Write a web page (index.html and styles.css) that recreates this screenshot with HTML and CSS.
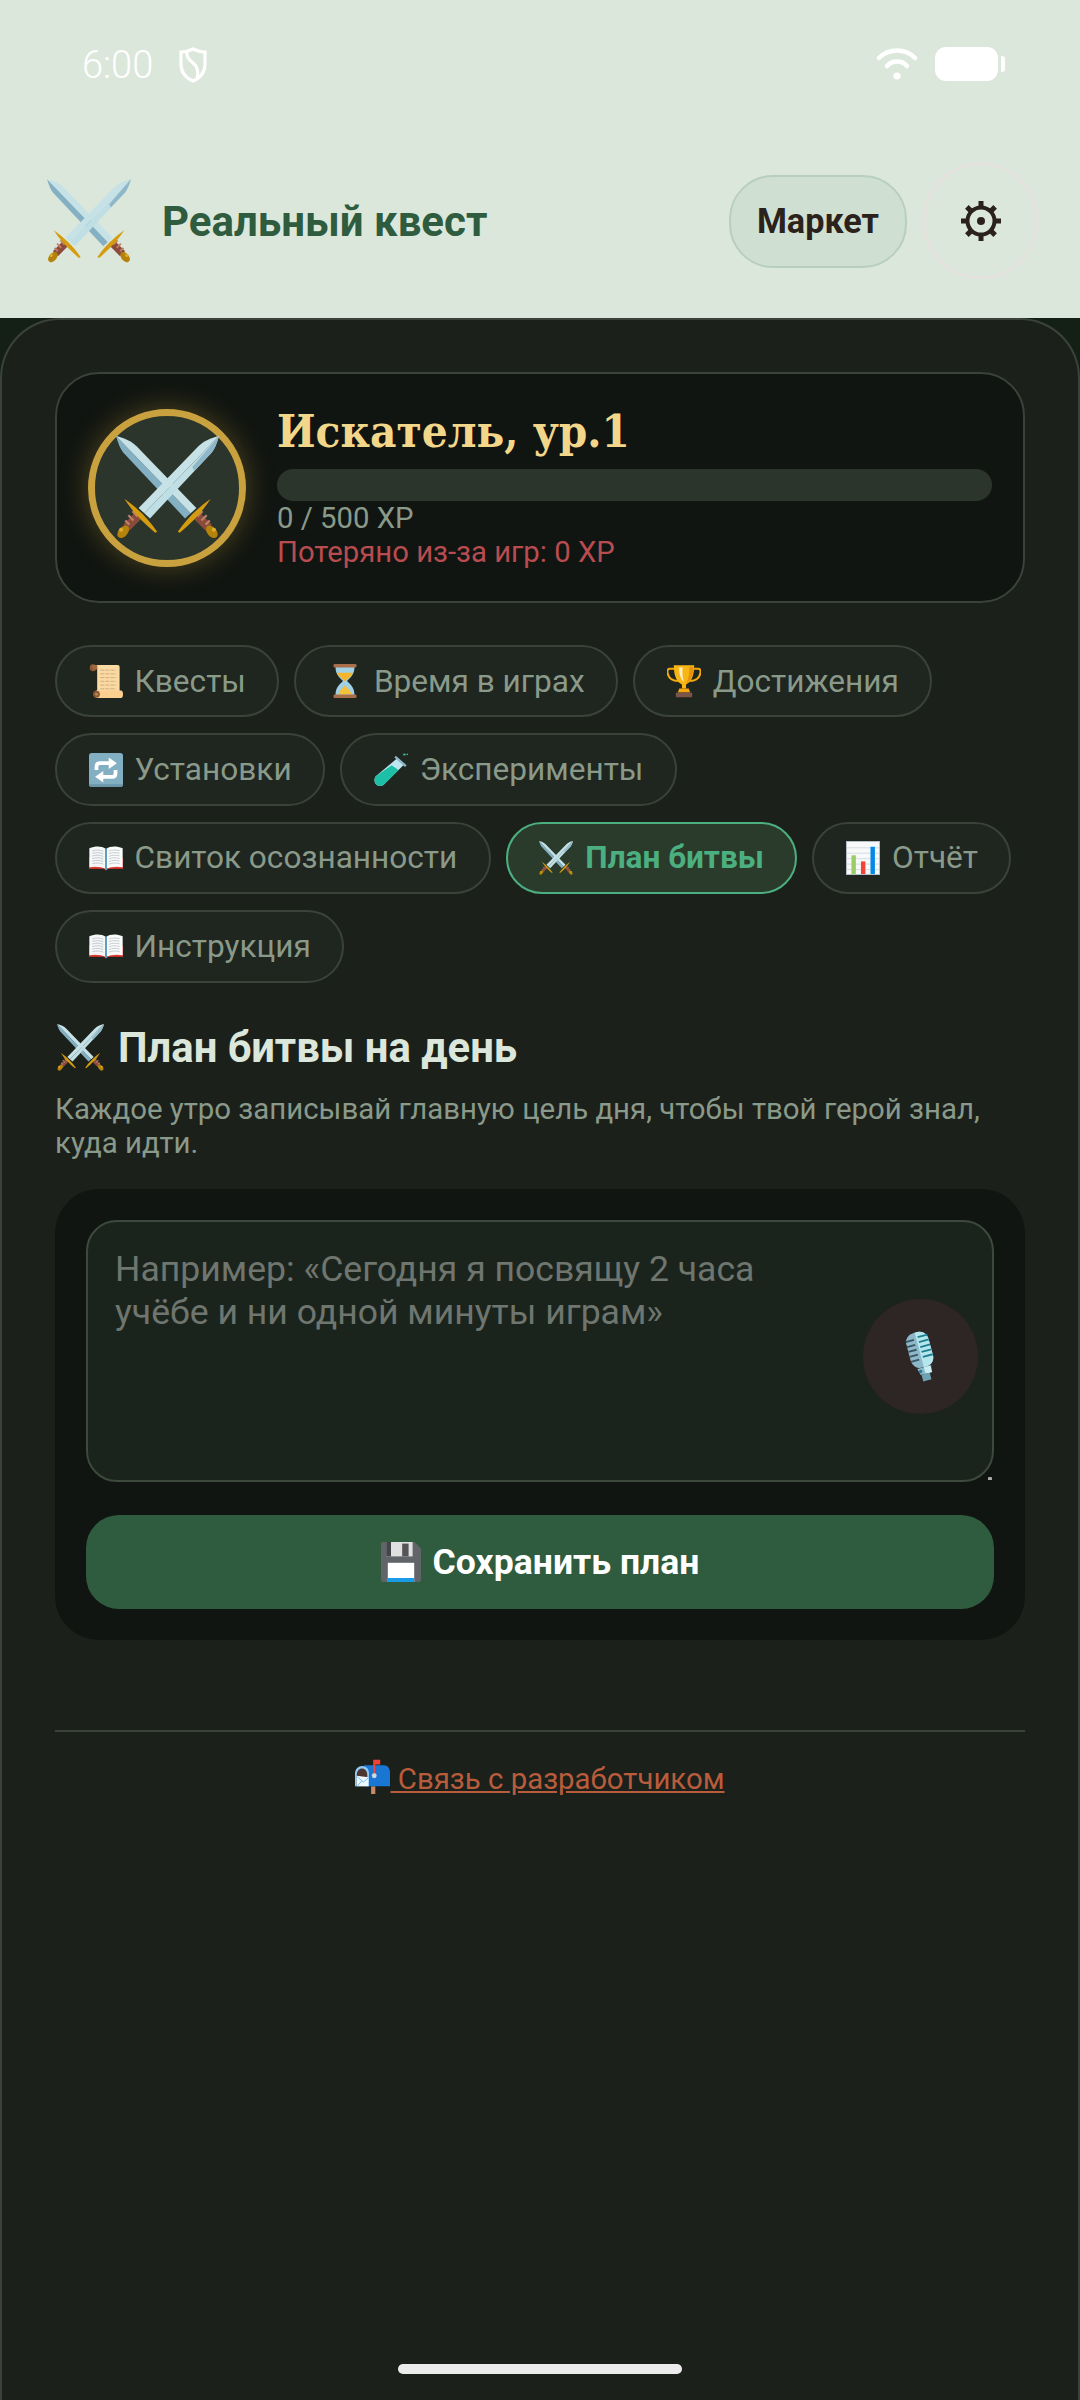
FILE: index.html
```html
<!DOCTYPE html>
<html lang="ru">
<head>
  <meta charset="UTF-8">
  <title>Реальный квест</title>
  <link rel="stylesheet" href="styles.css">
</head>
<body>

  <!-- emoji drawn once, reused below -->
  <svg class="sprites" xmlns="http://www.w3.org/2000/svg">
    <symbol id="sword-hilt" viewBox="0 0 100 100">
      <path d="M80 73 L93 86 L87 92 L74 79 Z" fill="#8a4b3a"/>
      <path d="M79 78 L84 73 M83 82 L88 77 M87 86 L91 82" stroke="#c07f68" stroke-width="2.2"/>
      <path d="M60 93 C68 81 78 71 92 61 C85 72 75 83 62 94 Z" fill="#d49c0e"/>
      <ellipse cx="93" cy="93" rx="7" ry="4.5" transform="rotate(50 93 93)" fill="#b5830b"/>
      <circle cx="95" cy="91" r="2" fill="#dcae2c"/>
    </symbol>
    <symbol id="swords" viewBox="0 0 100 100">
      <path d="M0 0 C2 7 4 12 7 16 L67 80 L72.5 75 Z" fill="#84b0c3"/>
      <path d="M0 0 C8 2 15 5 20 10 L78 70 L72.5 75 Z" fill="#c6e2e7"/>
      <path d="M50 46 L57 54 L50 60 L44 53 Z" fill="#2f8aa3"/>
      <use href="#sword-hilt" x="0" y="0" width="100" height="100"/>
      <g transform="matrix(-1 0 0 1 100 0)">
        <path d="M0 0 C2 7 4 12 7 16 L67 80 L72.5 75 Z" fill="#bfdfe5"/>
        <path d="M0 0 C8 2 15 5 20 10 L78 70 L72.5 75 Z" fill="#c6e2e7"/>
        <path d="M0 0 C2 7 4 12 7 16 L24 34 L26 30 Z" fill="#8eb8c9"/>
        <use href="#sword-hilt" x="0" y="0" width="100" height="100"/>
      </g>
    </symbol>
    <symbol id="scroll" viewBox="0 0 100 100">
      <path d="M20 3 H84 C88 3 90 5 90 9 V84 H24 V10 C24 7 22 5 20 3 Z" fill="#fbd9a3"/>
      <path d="M33 18 H80 M33 29 H80 M33 40 H80 M33 51 H80 M33 62 H80 M33 73 H80" stroke="#c9a679" stroke-width="2.5" stroke-dasharray="12 3"/>
      <circle cx="12" cy="11" r="10" fill="#8d5a33"/>
      <path d="M8 3 H24 V16 H12 Z" fill="#a06a3e"/>
      <path d="M20 78 H94 C98 78 100 82 100 89 C100 96 98 100 94 100 H20 Z" fill="#fbcf8f"/>
      <circle cx="22" cy="89" r="10" fill="#8d5a33"/>
      <circle cx="22" cy="89" r="4" fill="#c08a55"/>
    </symbol>
    <symbol id="hourglass" viewBox="0 0 100 100">
      <path d="M22 8 H78 C78 35 62 42 56 50 C62 58 78 65 78 92 H22 C22 65 38 58 44 50 C38 42 22 35 22 8 Z" fill="#9fd0e6"/>
      <path d="M27 26 H73 C70 38 58 42 52 50 H48 C42 42 30 38 27 26 Z" fill="#f3b52b"/>
      <path d="M30 90 C34 76 44 72 50 62 C56 72 66 76 70 90 Z" fill="#f3c13a"/>
      <rect x="16" y="0" width="68" height="10" rx="4" fill="#a86f4a"/>
      <rect x="16" y="90" width="68" height="10" rx="4" fill="#a86f4a"/>
    </symbol>
    <symbol id="trophy" viewBox="0 0 100 100">
      <path d="M22 14 H8 C2 14 0 20 2 28 C5 42 18 50 32 50 M78 14 H92 C98 14 100 20 98 28 C95 42 82 50 68 50" fill="none" stroke="#f5a80e" stroke-width="6"/>
      <path d="M20 4 H80 C80 34 72 54 56 60 V72 H44 V60 C28 54 20 34 20 4 Z" fill="#f9b516"/>
      <path d="M36 10 H46 C44 26 46 40 50 52 C40 44 35 28 36 10 Z" fill="#fff0c0"/>
      <path d="M66 8 H78 C78 30 70 50 56 58 C64 44 66 26 66 8 Z" fill="#e8920a"/>
      <path d="M36 72 H64 L68 84 H32 Z" fill="#f5a80e"/>
      <rect x="26" y="84" width="48" height="14" rx="2" fill="#7a5548"/>
    </symbol>
    <symbol id="repeat" viewBox="0 0 100 100">
      <rect x="0" y="0" width="100" height="100" rx="8" fill="#83afc3"/>
      <path d="M0 92 V92 C0 97 3 100 8 100 H92 C97 100 100 97 100 92 Z" fill="#6c96aa"/>
      <path d="M22 50 V40 C22 34 26 30 32 30 H62" fill="none" stroke="#fff" stroke-width="11"/>
      <path d="M58 13 L82 30 L58 47 Z" fill="#fff"/>
      <path d="M78 50 V60 C78 66 74 70 68 70 H38" fill="none" stroke="#fff" stroke-width="11"/>
      <path d="M42 53 L18 70 L42 87 Z" fill="#fff"/>
    </symbol>
    <symbol id="tube" viewBox="0 0 100 100">
      <path d="M70 14 L90 32 L30 92 C24 98 12 98 6 92 C0 86 0 74 6 68 Z" fill="#bfe6ee"/>
      <path d="M52 36 L72 50 L30 92 C24 98 12 98 6 92 C0 86 0 74 6 68 Z" fill="#1dbfa6"/>
      <path d="M64 8 L96 36 L91 41 L60 13 Z" fill="#8fb6c8"/>
      <rect x="86" y="2" width="7" height="5" fill="#2ac9b4"/>
      <rect x="96" y="2" width="4" height="4" fill="#2ac9b4"/>
    </symbol>
    <symbol id="book" viewBox="0 0 100 100">
      <g transform="translate(0 12) scale(1 .76)">
        <path d="M0 50 H100 V92 H56 L50 98 L44 92 H0 Z" fill="#e53b33"/>
        <path d="M1 86 V12 C20 2 38 4 49 14 V92 C36 84 18 82 1 86 Z" fill="#f4f6f7"/>
        <path d="M99 86 V12 C80 2 62 4 51 14 V92 C64 84 82 82 99 86 Z" fill="#fbfcfc"/>
        <path d="M10 22 C22 18 32 18 42 24 M10 32 C22 28 32 28 42 34 M10 42 C22 38 32 38 42 44 M10 52 C22 48 32 48 42 54 M10 62 C22 58 32 58 42 64 M10 72 C22 68 32 68 42 74 M90 22 C78 18 68 18 58 24 M90 32 C78 28 68 28 58 34 M90 42 C78 38 68 38 58 44 M90 52 C78 48 68 48 58 54 M90 62 C78 58 68 58 58 64 M90 72 C78 68 68 68 58 74" fill="none" stroke="#b8bec2" stroke-width="2.6"/>
        <path d="M47 14 H53 V96 H47 Z" fill="#5d9fc0"/>
      </g>
    </symbol>
    <symbol id="chart" viewBox="0 0 100 100">
      <rect x="0" y="0" width="100" height="100" fill="#b4bec4"/>
      <rect x="3" y="3" width="94" height="94" fill="#f7f9fa"/>
      <path d="M3 20 H97 M3 36 H97 M3 52 H97 M3 68 H97 M3 84 H97" stroke="#cfd8dc" stroke-width="2.5"/>
      <rect x="16" y="42" width="13" height="55" fill="#9ccc65"/>
      <rect x="44" y="60" width="13" height="37" fill="#f44336"/>
      <rect x="72" y="17" width="13" height="80" fill="#0288e8"/>
    </symbol>
    <symbol id="floppy" viewBox="0 0 100 100">
      <path d="M6 0 H84 L100 16 V94 C100 98 98 100 94 100 H6 C2 100 0 98 0 94 V6 C0 2 2 0 6 0 Z" fill="#616569"/>
      <rect x="13" y="0" width="66" height="36" fill="#e0e0e0"/>
      <rect x="13" y="0" width="12" height="36" fill="#424549"/>
      <rect x="53" y="4" width="16" height="32" fill="#555"/>
      <rect x="17" y="52" width="66" height="48" fill="#fff"/>
      <rect x="17" y="90" width="66" height="10" fill="#1a9be8"/>
    </symbol>
    <symbol id="mailbox" viewBox="0 0 100 100">
      <rect x="46" y="78" width="12" height="22" fill="#c88a66"/>
      <path d="M26 18 H82 C94 18 100 28 100 40 V78 H26 Z" fill="#1976d2"/>
      <path d="M0 78 V42 C0 28 10 20 20 20 C32 20 40 28 40 42 V78 Z" fill="#90caf9"/>
      <path d="M5 78 V46 C5 34 12 27 20 27 C28 27 35 34 35 46 V78 Z" fill="#4e342e"/>
      <path d="M5 48 L38 52 V78 H5 Z" fill="#eef7fd"/>
      <path d="M6 50 L24 66 L38 54 M6 78 L20 62" fill="none" stroke="#64b5f6" stroke-width="2.4"/>
      <path d="M52 44 V2 H72 V16 H58 V44 Z" fill="#f44336"/>
      <circle cx="55" cy="48" r="7" fill="#cfd8dc"/>
    </symbol>
    <symbol id="mic" viewBox="0 0 40 62">
      <g transform="rotate(-15 20 31)">
        <rect x="7" y="2" width="27" height="42" rx="11" fill="#8cb8ca"/>
        <path d="M20 2 H23 C30 2 34 7 34 13 V33 C34 39 30 44 23 44 H20 Z" fill="#b4e6ec"/>
        <path d="M7 10 H17 M7 16 H17 M7 22 H17 M7 28 H17 M7 34 H17" stroke="#3a5560" stroke-width="2.2"/>
        <path d="M22 8 H34 M22 14 H34 M22 20 H34 M22 26 H34 M22 32 H34" stroke="#1f7f92" stroke-width="2.2"/>
        <path d="M12 44 H29 L27 52 H14 Z" fill="#8cb8ca"/>
        <rect x="20" y="44" width="8" height="8" fill="#c8eef2"/>
        <circle cx="15" cy="48" r="2" fill="#237f95"/>
        <rect x="15" y="52" width="10" height="8" fill="#6ea3b6"/>
      </g>
    </symbol>
  </svg>

  <div class="top-area">
    <div class="status-bar">
      <div class="status-left">
        <span class="clock">6:00</span>
        <svg class="shield" viewBox="0 0 28 36" fill="none" stroke="#fff" stroke-width="3.2">
          <path d="M14 2 C18 4 22 5 26 5 V17 C26 25 21 31 14 34 C7 31 2 25 2 17 V5 C6 5 10 4 14 2 Z"/>
          <path d="M8 5 C7 10 10 13 14 16 C18 19 20 24 18 32"/>
        </svg>
      </div>
      <div class="status-right">
        <svg class="wifi" viewBox="0 0 42 34" fill="none" stroke="#fff" stroke-width="4.5" stroke-linecap="round">
          <path d="M3 11 C13 1 29 1 39 11"/>
          <path d="M11 19 C16 13 26 13 31 19"/>
          <circle cx="21" cy="29" r="3.6" fill="#fff" stroke="none"/>
        </svg>
        <div class="battery"></div>
        <div class="battery-cap"></div>
      </div>
    </div>

    <header class="app-header">
      <div class="brand">
        <svg class="brand-logo"><use href="#swords"/></svg>
        <h1>Реальный квест</h1>
      </div>
      <div class="header-actions">
        <button class="market-btn">Маркет</button>
        <button class="settings-btn">
          <svg viewBox="0 0 40 40" class="gear" fill="#2a221b">
            <g>
              <rect x="17.5" y="0" width="5" height="40"/>
              <rect x="17.5" y="0" width="5" height="40" transform="rotate(45 20 20)"/>
              <rect x="17.5" y="0" width="5" height="40" transform="rotate(90 20 20)"/>
              <rect x="17.5" y="0" width="5" height="40" transform="rotate(135 20 20)"/>
            </g>
            <circle cx="20" cy="20" r="13.5" fill="#dce7db" stroke="#2a221b" stroke-width="4"/>
            <circle cx="20" cy="20" r="4"/>
          </svg>
        </button>
      </div>
    </header>
  </div>

  <main class="panel">
    <section class="hero">
      <div class="avatar"><svg><use href="#swords"/></svg></div>
      <div class="hero-info">
        <div class="hero-name">Искатель, ур.1</div>
        <div class="xp-bar"></div>
        <div class="xp-text">0 / 500 XP</div>
        <div class="xp-lost">Потеряно из-за игр: 0 XP</div>
      </div>
    </section>

    <nav class="tabs">
      <button class="tab"><svg><use href="#scroll"/></svg>Квесты</button>
      <button class="tab"><svg><use href="#hourglass"/></svg>Время в играх</button>
      <button class="tab"><svg><use href="#trophy"/></svg>Достижения</button>
      <button class="tab"><svg><use href="#repeat"/></svg>Установки</button>
      <button class="tab"><svg><use href="#tube"/></svg>Эксперименты</button>
      <button class="tab"><svg><use href="#book"/></svg>Свиток осознанности</button>
      <button class="tab active"><svg><use href="#swords"/></svg>План битвы</button>
      <button class="tab"><svg><use href="#chart"/></svg>Отчёт</button>
      <button class="tab"><svg><use href="#book"/></svg>Инструкция</button>
    </nav>

    <section class="plan">
      <h2><svg><use href="#swords"/></svg>План битвы на день</h2>
      <p class="plan-desc">Каждое утро записывай главную цель дня, чтобы твой герой знал, куда идти.</p>

      <div class="plan-card">
        <div class="plan-input">
          <textarea placeholder="Например: «Сегодня я посвящу 2 часа учёбе и ни одной минуты играм»"></textarea>
          <button class="mic-btn"><svg><use href="#mic"/></svg></button>
        </div>
        <button class="save-btn"><svg><use href="#floppy"/></svg>Сохранить план</button>
      </div>
    </section>

    <footer class="panel-footer">
      <a href="#" class="dev-link"><svg><use href="#mailbox"/></svg> Связь с разработчиком</a>
    </footer>

    <div class="home-bar"></div>
  </main>

</body>
</html>
```

FILE: styles.css
```css
* {
  margin: 0;
  padding: 0;
  box-sizing: border-box;
  font-family: 'Roboto', sans-serif;
}

body {
  width: 1080px;
  height: 2400px;
  overflow: hidden;
  background-color: #142015;
  display: flex;
  flex-direction: column;
}

button {
  border: none;
  background: none;
}

.sprites {
  display: none;
}

/* Top: status bar + app header */
.top-area {
  background-color: #dce7db;
  height: 318px;
  flex-shrink: 0;
}

.status-bar {
  height: 163px;
  padding: 47px 75px 0 82px;
  display: flex;
  justify-content: space-between;
  align-items: flex-start;
}

.status-left {
  display: flex;
  align-items: center;
  gap: 26px;
}

.clock {
  color: #fff;
  font-size: 38px;
  font-weight: 300;
  line-height: 36px;
}

.shield {
  width: 28px;
  height: 36px;
}

.status-right {
  display: flex;
  align-items: flex-start;
}

.wifi {
  width: 42px;
  height: 34px;
  margin-right: 17px;
}

.battery {
  width: 63px;
  height: 34px;
  background-color: #fff;
  border-radius: 11px;
}

.battery-cap {
  width: 4px;
  height: 16px;
  margin: 9px 0 0 3px;
  background-color: #fff;
  border-radius: 0 3px 3px 0;
}

.app-header {
  height: 116px;
  padding: 0 42px 0 47px;
  display: flex;
  justify-content: space-between;
  align-items: center;
}

.brand {
  display: flex;
  align-items: center;
  gap: 31px;
}

.brand-logo {
  width: 84px;
  height: 84px;
}

.brand h1 {
  font-size: 42px;
  font-weight: 700;
  color: #2f5c3e;
}

.header-actions {
  display: flex;
  align-items: center;
  gap: 16px;
}

.market-btn {
  width: 178px;
  height: 93px;
  border: 2px solid #b9cfbe;
  border-radius: 44px;
  background-color: #cfdfd1;
  color: #2a221b;
  font-size: 34.2px;
  font-weight: 700;
}

.settings-btn {
  width: 115px;
  height: 116px;
  border: 2.5px solid #e8e0dc;
  border-radius: 50%;
  display: flex;
  align-items: center;
  justify-content: center;
}

.gear {
  width: 40px;
  height: 40px;
}

/* Dark panel */
.panel {
  flex: 1;
  position: relative;
  padding: 52px 53px 0;
  background-color: #1c201b;
  border: 2px solid #3a423a;
  border-bottom: none;
  border-radius: 60px 60px 0 0;
}

.hero {
  height: 231px;
  padding: 0 31px;
  display: flex;
  align-items: center;
  gap: 31px;
  background-color: #111511;
  border: 2px solid #3a423a;
  border-radius: 44px;
}

.avatar {
  width: 158px;
  height: 158px;
  flex-shrink: 0;
  display: flex;
  align-items: center;
  justify-content: center;
  background-color: #2c352b;
  border: 7px solid #c9a23f;
  border-radius: 50%;
  box-shadow: 0 0 28px rgba(201, 162, 63, 0.35);
}

.avatar svg {
  width: 103px;
  height: 103px;
}

.hero-info {
  flex: 1;
}

.hero-name {
  font-family: 'DejaVu Serif Condensed', 'DejaVu Serif', serif;
  font-size: 45.4px;
  font-stretch: condensed;
  font-weight: 700;
  line-height: 50px;
  color: #f2d78a;
}

.xp-bar {
  height: 32px;
  margin-top: 13px;
  background-color: #2c352b;
  border-radius: 16px;
}

.xp-text,
.xp-lost {
  font-size: 29.3px;
  line-height: 34px;
}

.xp-text {
  color: #8a9a8a;
}

.xp-lost {
  color: #b84c50;
}

/* Tabs */
.tabs {
  margin-top: 42px;
  display: flex;
  flex-wrap: wrap;
  gap: 16px 15px;
}

.tab {
  height: 72.4px;
  padding: 0 31.5px;
  display: flex;
  align-items: center;
  gap: 12px;
  background-color: #1f251f;
  border: 2px solid #3a423a;
  border-radius: 37px;
  color: #8a9a8a;
  font-size: 31.6px;
}

.tab svg {
  width: 34px;
  height: 34px;
}

.tab.active {
  background-color: #2a3b2c;
  border-color: #4caf80;
  color: #4caf80;
  font-weight: 700;
}

/* Battle plan */
.plan {
  margin-top: 41px;
}

.plan h2 {
  display: flex;
  align-items: center;
  gap: 14px;
  font-size: 41.8px;
  font-weight: 700;
  line-height: 48px;
  color: #dce7db;
}

.plan h2 svg {
  width: 47px;
  height: 47px;
  margin-left: 2px;
}

.plan-desc {
  margin-top: 20px;
  font-size: 29.4px;
  line-height: 34px;
  color: #8a9a8a;
}

.plan-card {
  margin-top: 29px;
  padding: 31px;
  background-color: #111511;
  border-radius: 44px;
}

.plan-input {
  position: relative;
}

.plan-input textarea {
  display: block;
  width: 100%;
  height: 262px;
  padding: 26px 194px 0 27px;
  background-color: #1b241c;
  border: 2px solid #3d493d;
  border-radius: 31px;
  outline: none;
  font-size: 35.6px;
  line-height: 43px;
  color: #dce7db;
  resize: vertical;
}

.plan-input textarea::placeholder {
  color: #6f756f;
}

.plan-input textarea::-webkit-resizer {
  background: radial-gradient(circle at 13px 14px, #aaa 2px, transparent 2.5px);
}

.mic-btn {
  position: absolute;
  right: 16px;
  bottom: 68px;
  width: 115px;
  height: 115px;
  display: flex;
  align-items: center;
  justify-content: center;
  background-color: #2e2525;
  border-radius: 50%;
}

.mic-btn svg {
  width: 34px;
  height: 53px;
}

.save-btn {
  width: 100%;
  height: 94px;
  margin-top: 33px;
  display: flex;
  align-items: center;
  justify-content: center;
  gap: 12px;
  background-color: #2f5c3e;
  border-radius: 33px;
  color: #fff;
  font-size: 35.6px;
  font-weight: 700;
}

.save-btn svg {
  width: 40px;
  height: 40px;
}

/* Footer */
.panel-footer {
  margin-top: 90px;
  padding-top: 27px;
  border-top: 2px solid #3a423a;
  text-align: center;
}

.dev-link {
  color: #b85c3c;
  font-size: 29.4px;
  line-height: 36px;
}

.dev-link svg {
  width: 35px;
  height: 35px;
  vertical-align: -5px;
}

.home-bar {
  position: absolute;
  left: 396px;
  bottom: 26px;
  width: 284px;
  height: 10px;
  background-color: #ececec;
  border-radius: 5px;
}
```
